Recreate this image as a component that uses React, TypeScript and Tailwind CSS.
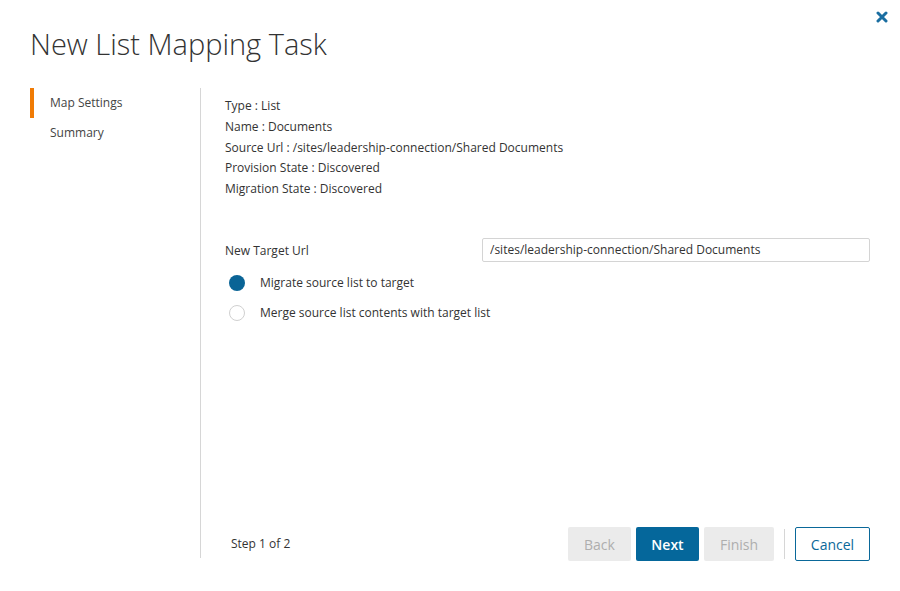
import { useState } from 'react';

const infoLines = [
  'Type : List',
  'Name : Documents',
  'Source Url : /sites/leadership-connection/Shared Documents',
  'Provision State : Discovered',
  'Migration State : Discovered',
];

export default function App() {
  const [mode, setMode] = useState<'migrate' | 'merge'>('migrate');
  const [targetUrl, setTargetUrl] = useState('/sites/leadership-connection/Shared Documents');

  return (
    <div className="relative w-[900px] h-[591px] bg-white text-[#333] font-['Open_Sans',sans-serif] overflow-hidden">
      {/* Close */}
      <button type="button" className="absolute top-[11px] right-[12px] w-[12px] h-[12px] flex items-center justify-center">
        <svg viewBox="0 0 12 12" className="w-[12px] h-[12px]">
          <path d="M2 2 L10 10 M10 2 L2 10" stroke="#1a6ea1" strokeWidth="3" strokeLinecap="round" />
        </svg>
      </button>

      <h1 className="pl-[30px] pt-[26px] text-[29px] leading-[36px] font-light text-[#333]">New List Mapping Task</h1>

      <div className="flex mt-[26px]">
        {/* Left steps */}
        <nav className="w-[201px] h-[470px] border-r border-[#d6d6d6] pl-[30px] shrink-0">
          <div className="h-[30px] flex items-center border-l-4 border-[#f07b05] pl-[16px] text-[12px] text-[#444]">
            Map Settings
          </div>
          <div className="h-[30px] flex items-center pl-[20px] text-[12px] text-[#444]">Summary</div>
        </nav>

        {/* Content */}
        <div className="flex-1 flex flex-col h-[470px] pl-[24px] pr-[30px]">
          <div className="pt-[8px] text-[12px] leading-[20.8px]">
            {infoLines.map((line) => (
              <div key={line}>{line}</div>
            ))}
          </div>

          <div className="mt-[38px] flex items-center">
            <label className="w-[257px] text-[12px] pt-[3px]">New Target Url</label>
            <input
              value={targetUrl}
              onChange={(e) => setTargetUrl(e.target.value)}
              className="flex-1 h-[24px] border border-[#d4d4d4] rounded-[2px] px-[7px] text-[12px] text-[#333] outline-none"
            />
          </div>

          <div className="mt-[12px] flex flex-col gap-[12px]">
            <label className="flex items-center gap-[15px] cursor-pointer" onClick={() => setMode('migrate')}>
              <span
                className={`w-[16px] h-[16px] rounded-full ml-[4px] ${
                  mode === 'migrate' ? 'bg-[#0a6496]' : 'border border-[#d0d0d0] bg-white'
                }`}
              />
              <span className="text-[12px]">Migrate source list to target</span>
            </label>
            <label className="flex items-center gap-[15px] cursor-pointer" onClick={() => setMode('merge')}>
              <span
                className={`w-[16px] h-[16px] rounded-full ml-[4px] ${
                  mode === 'merge' ? 'bg-[#0a6496]' : 'border border-[#d0d0d0] bg-white'
                }`}
              />
              <span className="text-[12px]">Merge source list contents with target list</span>
            </label>
          </div>

          {/* Footer */}
          <div className="mt-auto flex items-center mb-[-3px]">
            <span className="pl-[6px] text-[12px]">Step 1 of 2</span>
            <div className="ml-auto flex items-center">
              <button type="button" disabled className="w-[63px] h-[34px] rounded-[2px] bg-[#ebebeb] text-[#aeaeae] text-[14px]">
                Back
              </button>
              <button type="button" className="ml-[5px] w-[63px] h-[34px] rounded-[2px] bg-[#05679b] text-white text-[14px] font-semibold">
                Next
              </button>
              <button type="button" disabled className="ml-[5px] w-[70px] h-[34px] rounded-[2px] bg-[#ebebeb] text-[#aeaeae] text-[14px]">
                Finish
              </button>
              <span className="mx-[10px] w-px h-[30px] bg-[#d6d6d6]" />
              <button type="button" className="w-[75px] h-[34px] rounded-[2px] border border-[#0a6899] text-[#0a6899] text-[14px] bg-white">
                Cancel
              </button>
            </div>
          </div>
        </div>
      </div>
    </div>
  );
}
